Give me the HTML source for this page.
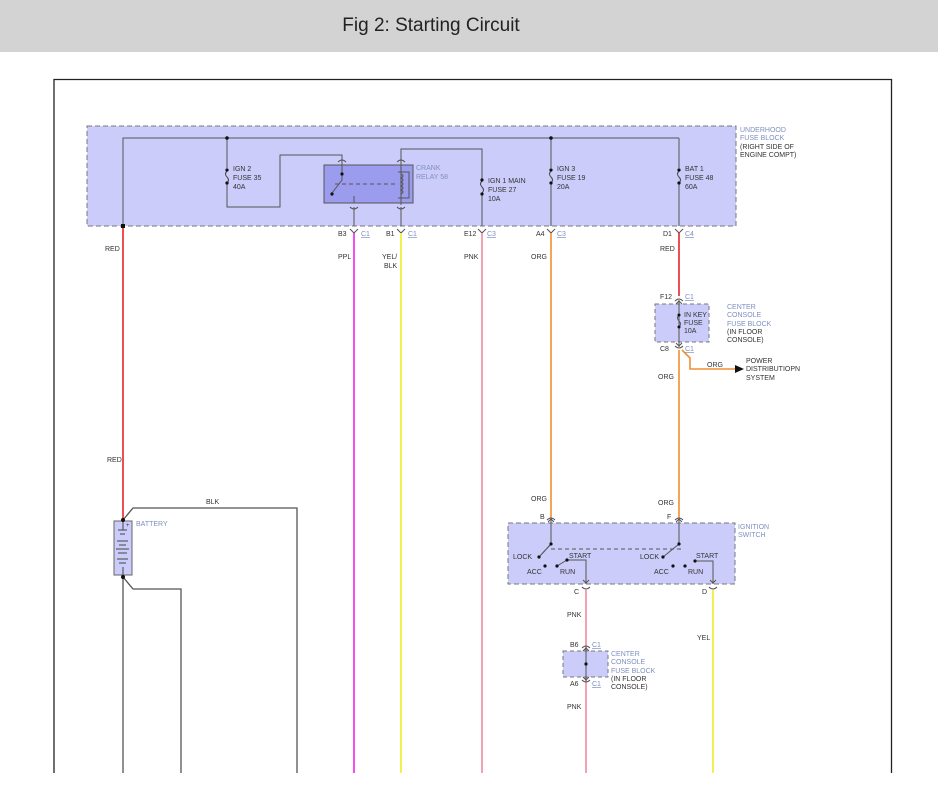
<!DOCTYPE html>
<html><head><meta charset="utf-8"><style>
html,body{margin:0;padding:0;background:#fff;width:938px;height:809px;overflow:hidden}
svg{display:block}
text{font-family:"Liberation Sans",sans-serif;font-size:7px;fill:#333}
.b{fill:#7f8fc0}
.u{fill:#7f8fc0;text-decoration:underline}
</style></head><body>
<svg width="938" height="809" viewBox="0 0 938 809" xmlns="http://www.w3.org/2000/svg">
<rect x="0" y="0" width="938" height="52" fill="#d3d3d3"/>
<text x="431" y="31" text-anchor="middle" style="font-size:19px;fill:#222">Fig 2: Starting Circuit</text>
<!-- frame -->
<path d="M54 773 V79.5 H891.5 V773" fill="none" stroke="#222" stroke-width="1.3"/>

<!-- underhood fuse block -->
<rect x="87" y="126" width="649" height="100" fill="#ccccfa" stroke="#777" stroke-dasharray="5,3"/>
<g fill="none" stroke="#555" stroke-width="1">
<path d="M123 226 V138 H679"/>
<path d="M227 138 V168 M227 184 V207 H280 V155 H342 V163"/>
<path d="M401 163 V149 H482 V180 M482 193 V226"/>
<path d="M551 138 V168 M551 184 V226"/>
<path d="M679 138 V168 M679 184 V226"/>
</g>
<!-- fuse symbols -->
<g fill="none" stroke="#444" stroke-width="1">
<path d="M227 171 q-3 3 0 6 q3 3 0 6"/>
<path d="M482 181 q-3 3 0 6 q3 3 0 6"/>
<path d="M551 171 q-3 3 0 6 q3 3 0 6"/>
<path d="M679 171 q-3 3 0 6 q3 3 0 6"/>
</g>
<g fill="#111">
<circle cx="227" cy="138" r="1.8"/><circle cx="551" cy="138" r="1.8"/>
<circle cx="227" cy="170" r="1.6"/><circle cx="227" cy="183" r="1.6"/>
<circle cx="482" cy="180" r="1.6"/><circle cx="482" cy="194" r="1.6"/>
<circle cx="551" cy="170" r="1.6"/><circle cx="551" cy="183" r="1.6"/>
<circle cx="679" cy="170" r="1.6"/><circle cx="679" cy="183" r="1.6"/>
<rect x="121" y="224" width="4" height="4"/>
</g>
<text x="233" y="171">IGN 2</text><text x="233" y="180">FUSE 35</text><text x="233" y="189">40A</text>
<text x="488" y="183">IGN 1 MAIN</text><text x="488" y="192">FUSE 27</text><text x="488" y="201">10A</text>
<text x="557" y="171">IGN 3</text><text x="557" y="180">FUSE 19</text><text x="557" y="189">20A</text>
<text x="685" y="171">BAT 1</text><text x="685" y="180">FUSE 48</text><text x="685" y="189">60A</text>
<text x="740" y="132" class="b">UNDERHOOD</text><text x="740" y="140" class="b">FUSE BLOCK</text>
<text x="740" y="149">(RIGHT SIDE OF</text><text x="740" y="157">ENGINE COMPT)</text>

<!-- relay -->
<rect x="324" y="165" width="89" height="38" fill="#9c9cee" stroke="#555"/>
<g fill="none" stroke="#555" stroke-width="1">
<path d="M338 162 q4 -4 8 0 M397 162 q4 -4 8 0 M350 207 q4 4 8 0 M397 207 q4 4 8 0"/>
<path d="M342 163 V180 L332 193"/>
<path d="M335 184 H398" stroke-dasharray="4,3"/>
<path d="M354 196 V203 M354 207 V226 M401 163 V205 M401 207 V226"/>
<path d="M398 172 H409 V198 H398 M401 174 q4 2 0 4 q4 2 0 4 q4 2 0 4 q4 2 0 4 q4 2 0 4"/>
</g>
<circle cx="342" cy="174" r="1.6" fill="#111"/><circle cx="332" cy="194" r="1.6" fill="#111"/>
<text x="416" y="170" class="b">CRANK</text><text x="416" y="179" class="b">RELAY 58</text>

<!-- connector labels row -->
<g fill="none" stroke="#555"><path d="M350 229 l4 4 l4 -4 M397 229 l4 4 l4 -4 M478 229 l4 4 l4 -4 M547 229 l4 4 l4 -4 M675 229 l4 4 l4 -4"/></g>
<text x="338" y="236">B3</text><text x="361" y="236" class="u">C1</text>
<text x="386" y="236">B1</text><text x="408" y="236" class="u">C1</text>
<text x="464" y="236">E12</text><text x="487" y="236" class="u">C3</text>
<text x="536" y="236">A4</text><text x="557" y="236" class="u">C3</text>
<text x="663" y="236">D1</text><text x="685" y="236" class="u">C4</text>

<!-- wires -->
<path d="M123 228 V520" stroke="#e8242a" stroke-width="1.6"/>
<path d="M354 233 V773" stroke="#ee22ee" stroke-width="1.6"/>
<path d="M401 233 V773" stroke="#eeee22" stroke-width="1.6"/>
<path d="M482 233 V773" stroke="#f08aa0" stroke-width="1.6"/>
<path d="M551 233 V518" stroke="#f09030" stroke-width="1.6"/>
<path d="M679 233 V296" stroke="#e8242a" stroke-width="1.6"/>
<path d="M679 350 V518 M682 350 L690 358 V369 H735" fill="none" stroke="#f09030" stroke-width="1.6"/>
<path d="M735 365 L744 369 L735 373 Z" fill="#111"/>
<path d="M586 590 V773" stroke="#f08aa0" stroke-width="1.6"/>
<path d="M713 590 V773" stroke="#eeee22" stroke-width="1.6"/>
<text x="105" y="251">RED</text><text x="338" y="259">PPL</text>
<text x="382" y="259">YEL/</text><text x="384" y="268">BLK</text>
<text x="464" y="259">PNK</text><text x="531" y="259">ORG</text><text x="660" y="251">RED</text>
<text x="107" y="462">RED</text>
<text x="531" y="501">ORG</text><text x="658" y="505">ORG</text>
<text x="658" y="379">ORG</text><text x="707" y="367">ORG</text>
<text x="746" y="363">POWER</text><text x="746" y="371">DISTRIBUTIOPN</text><text x="746" y="380">SYSTEM</text>

<!-- center console fuse 1 -->
<rect x="655" y="304" width="54" height="38" fill="#ccccfa" stroke="#777" stroke-dasharray="4,3"/>
<g fill="none" stroke="#555"><path d="M675 301 q4 -4 8 0 M675 346 q4 4 8 0 M679 300 V347 M676 304 l3 -3 l3 3 M676 343 l3 3 l3 -3"/>
<path d="M679 315 q-3 3 0 6 q3 3 0 6"/></g>
<circle cx="679" cy="315" r="1.5" fill="#111"/><circle cx="679" cy="327" r="1.5" fill="#111"/>
<text x="660" y="299">F12</text><text x="685" y="299" class="u">C1</text>
<text x="684" y="317">IN KEY</text><text x="684" y="325">FUSE</text><text x="684" y="333">10A</text>
<text x="660" y="351">C8</text><text x="685" y="351" class="u">C1</text>
<text x="727" y="309" class="b">CENTER</text><text x="727" y="317" class="b">CONSOLE</text>
<text x="727" y="326" class="b">FUSE BLOCK</text><text x="727" y="334">(IN FLOOR</text><text x="727" y="342">CONSOLE)</text>

<!-- battery -->
<path d="M123 520 L133 508 H297 V773 M123 577 L133 589 H181 V773 M123 577 V773" fill="none" stroke="#555" stroke-width="1.3"/>
<text x="206" y="504">BLK</text>
<rect x="114" y="521" width="18" height="54" fill="#ccccfa" stroke="#666"/>
<g stroke="#444"><path d="M118 530 H127 M120 534 H125 M117 541 H128 M119 545 H126 M116 549 H129 M118 553 H127 M117 559 H128 M119 563 H126 M123 521 V530 M123 567 V576"/></g>
<circle cx="123" cy="520" r="2" fill="#111"/><circle cx="123" cy="577" r="2" fill="#111"/>
<text x="126" y="527" style="font-size:6px">+</text>
<text x="136" y="526" class="b">BATTERY</text>

<!-- ignition switch -->
<rect x="508" y="523" width="227" height="61" fill="#ccccfa" stroke="#777" stroke-dasharray="5,3"/>
<g fill="none" stroke="#555">
<path d="M547 520 q4 -4 8 0 M675 520 q4 -4 8 0 M582 587 q4 4 8 0 M709 587 q4 4 8 0"/>
<path d="M551 518 V544 L539 557 M551 549 H681" stroke-dasharray="4,3"/>
<path d="M551 518 V544 L539 557"/>
<path d="M679 518 V544 L663 557"/>
<path d="M557 566 L567 560 H586 V584 M695 561 H713 V584"/>
<path d="M548 522 l3 -3 l3 3 M676 522 l3 -3 l3 3 M583 580 l3 3 l3 -3 M710 580 l3 3 l3 -3"/>
</g>
<g fill="#111"><circle cx="551" cy="544" r="1.6"/><circle cx="539" cy="557" r="1.6"/><circle cx="545" cy="566" r="1.6"/><circle cx="557" cy="566" r="1.6"/><circle cx="567" cy="560" r="1.6"/>
<circle cx="679" cy="544" r="1.6"/><circle cx="663" cy="557" r="1.6"/><circle cx="673" cy="566" r="1.6"/><circle cx="685" cy="566" r="1.6"/><circle cx="695" cy="561" r="1.6"/></g>
<text x="540" y="519">B</text><text x="667" y="519">F</text>
<text x="513" y="559">LOCK</text><text x="527" y="574">ACC</text><text x="569" y="558">START</text><text x="560" y="574">RUN</text>
<text x="640" y="559">LOCK</text><text x="654" y="574">ACC</text><text x="696" y="558">START</text><text x="688" y="574">RUN</text>
<text x="738" y="529" class="b">IGNITION</text><text x="738" y="537" class="b">SWITCH</text>
<text x="574" y="594">C</text><text x="702" y="594">D</text>
<text x="567" y="617">PNK</text><text x="697" y="640">YEL</text>

<!-- center console fuse 2 -->
<rect x="563" y="651" width="45" height="26" fill="#ccccfa" stroke="#777" stroke-dasharray="4,3"/>
<g fill="none" stroke="#555"><path d="M582 648 q4 -4 8 0 M582 680 q4 4 8 0 M586 647 V681 M583 651 l3 -3 l3 3 M583 677 l3 3 l3 -3"/></g>
<circle cx="586" cy="664" r="1.6" fill="#111"/>
<text x="570" y="647">B6</text><text x="592" y="647" class="u">C1</text>
<text x="570" y="686">A6</text><text x="592" y="686" class="u">C1</text>
<text x="611" y="656" class="b">CENTER</text><text x="611" y="664" class="b">CONSOLE</text>
<text x="611" y="673" class="b">FUSE BLOCK</text><text x="611" y="681">(IN FLOOR</text><text x="611" y="689">CONSOLE)</text>
<text x="567" y="709">PNK</text>
</svg>
</body></html>
